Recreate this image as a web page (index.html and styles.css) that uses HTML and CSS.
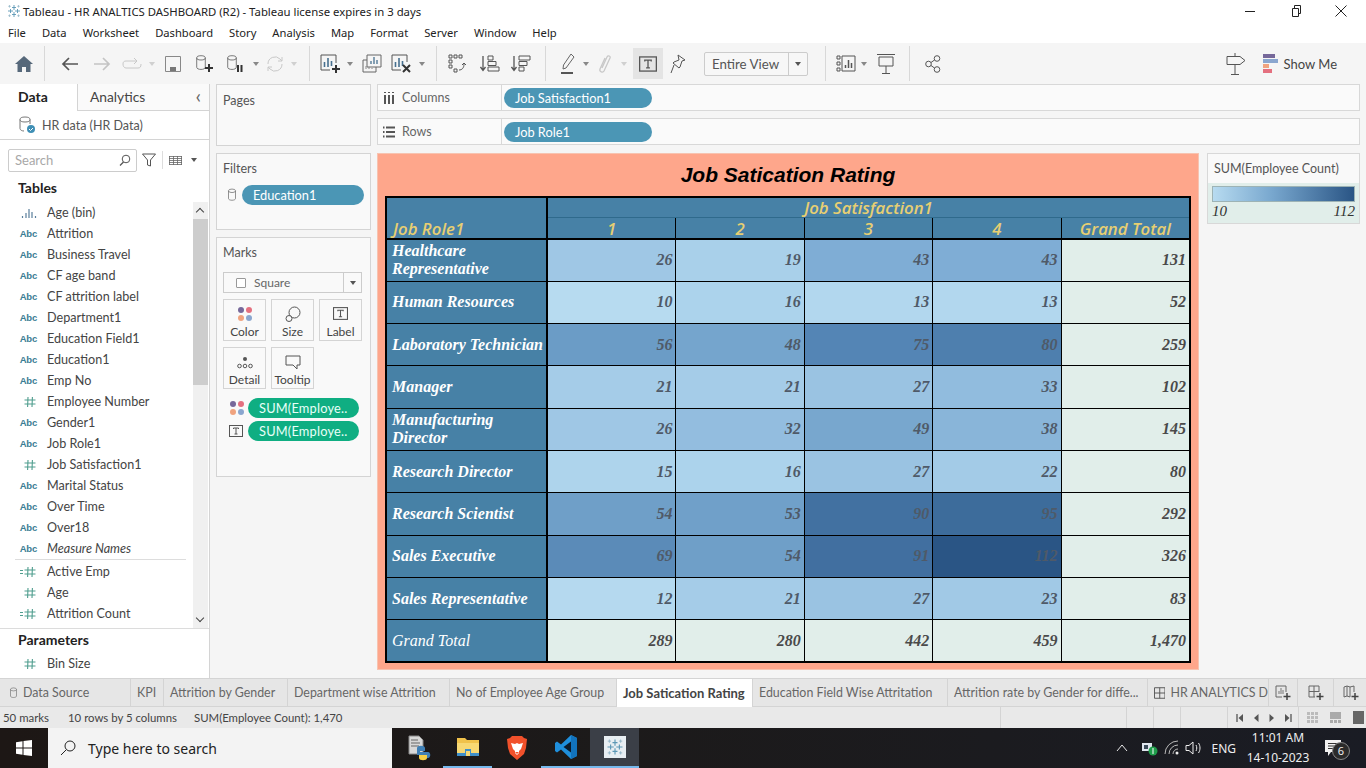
FILE: index.html
```html
<!DOCTYPE html>
<html lang="en">
<head>
    <meta charset="UTF-8">
    <title>Tableau - HR ANALTICS DASHBOARD (R2)</title>
    <link rel="stylesheet" href="styles.css">
</head>
<body>
    <svg class="defs" width="0" height="0">
        <symbol id="snow" viewBox="0 0 16 16">
            <path d="M8 2v5M6 4.500h4M8 9v5M6 11.500h4M2 8h5M4.500 6v4M9 8h5M11.500 6v4" stroke="#5b97b5" stroke-width=".9" fill="none"/>
            <path d="M3.500 2v2.600M2.200 3.300h2.600M12.500 2v2.600M11.200 3.300h2.600M3.500 11.400V14M2.200 12.700h2.600M12.500 11.400V14M11.200 12.700h2.600" stroke="#8fb4c6" stroke-width=".7" fill="none"/>
        </symbol>
        <symbol id="hash" viewBox="0 0 14 14">
            <path d="M5 2 4.600 12M9.400 2 9 12M1.500 5h11M1.500 9h11" stroke="#4f9d8e" stroke-width="1.100" fill="none"/>
        </symbol>
        <symbol id="calc" viewBox="0 0 18 14">
            <path d="M8 2 7.600 12M12.400 2 12 12M4.500 5h11M4.500 9h11" stroke="#4f9d8e" stroke-width="1.100" fill="none"/>
            <path d="M0 5.500h3M0 8.500h3" stroke="#4f9d8e" stroke-width="1" fill="none"/>
        </symbol>
        <symbol id="db" viewBox="0 0 14 20">
            <ellipse cx="7" cy="4" rx="5" ry="2.500" fill="none" stroke="#666"/>
            <path d="M2 4v11c0 1.500 2.200 2.500 5 2.500s5-1 5-2.500V4" fill="none" stroke="#666"/>
        </symbol>
        <symbol id="dots" viewBox="0 0 16 16">
            <circle cx="4" cy="4" r="3" fill="#76689a"/>
            <circle cx="12" cy="4" r="3" fill="#e4707f"/>
            <circle cx="4" cy="12" r="3" fill="#f0a37f"/>
            <circle cx="12" cy="12" r="3" fill="#8aa6cf"/>
        </symbol>
        <symbol id="tbox" viewBox="0 0 14 14">
            <rect x=".5" y="1.500" width="13" height="11" fill="none" stroke="#555"/>
            <path d="M4.500 5V4h5v1M7 4v6M5.500 10h3" fill="none" stroke="#555"/>
        </symbol>
    </svg>

    <header class="titlebar">
        <svg class="win-icon" width="16" height="16"><use href="#snow"/></svg>
        <span class="win-title">Tableau - HR ANALTICS DASHBOARD (R2) - Tableau license expires in 3 days</span>
        <div class="win-controls">
            <svg width="12" height="12" viewBox="0 0 12 12"><path d="M1 6.500h10" stroke="#222"/></svg>
            <svg width="12" height="12" viewBox="0 0 12 12"><path d="M2.500 3.500h6v8h-6zM4.500 3.500V.5h6v8h-2" fill="none" stroke="#222"/></svg>
            <svg width="12" height="12" viewBox="0 0 12 12"><path d="M.5.500l11 11M11.500.500l-11 11" stroke="#222" fill="none"/></svg>
        </div>
    </header>

    <nav class="menubar">
        <span>File</span><span>Data</span><span>Worksheet</span><span>Dashboard</span><span>Story</span><span>Analysis</span><span>Map</span><span>Format</span><span>Server</span><span>Window</span><span>Help</span>
    </nav>

    <div class="toolbar">
        <div class="tool w32"><svg width="18" height="16" viewBox="0 0 18 16"><path d="M9 0 0 8h2.500v8h4.500v-5h4v5h4.500V8H18z" fill="#56687a"/></svg></div>
        <i class="sep s-home"></i>
        <div class="tool w32"><svg width="18" height="14" viewBox="0 0 18 14"><path d="M17 7H2M8 1 2 7l6 6" fill="none" stroke="#555" stroke-width="1.700"/></svg></div>
        <div class="tool w32"><svg width="18" height="14" viewBox="0 0 18 14"><path d="M1 7h15M10 1l6 6-6 6" fill="none" stroke="#c4c4c4" stroke-width="1.700"/></svg></div>
        <div class="tool w28"><svg width="20" height="12" viewBox="0 0 20 12"><path d="M14 3H4C2 3 1 4 1 6s1 4 3 4h12c2 0 3-1 3-4M12 0l3 3-3 3" fill="none" stroke="#c8c8c8"/></svg></div>
        <b class="caret off"></b>
        <div class="tool w30"><svg width="16" height="16" viewBox="0 0 16 16"><path d="M.5.500h15v15H.500z" fill="none" stroke="#888"/><path d="M5 15v-4h6v4z" fill="#777"/></svg></div>
        <div class="tool w34"><svg width="20" height="20" viewBox="0 0 20 20"><use href="#db" width="12" height="18" x="0" y="0"/><path d="M14 10v8M10 14h8" stroke="#333" stroke-width="2"/></svg></div>
        <div class="tool w28"><svg width="20" height="20" viewBox="0 0 20 20"><use href="#db" width="12" height="18" x="0" y="0"/><path d="M12 11v7M15.500 11v7" stroke="#333" stroke-width="2"/></svg></div>
        <b class="caret"></b>
        <div class="tool w26"><svg width="18" height="18" viewBox="0 0 18 18"><path d="M2 9a7 7 0 0 1 12-5l2 2M16 9a7 7 0 0 1-12 5l-2-2M16 2v4h-4M2 16v-4h4" fill="none" stroke="#c8c8c8"/></svg></div>
        <b class="caret off"></b>
        <i class="sep s-a"></i>
        <div class="tool w26"><svg width="22" height="20" viewBox="0 0 22 20"><path d="M16 1H1v15h9" fill="none" stroke="#555"/><path d="M16 1v8" stroke="#555"/><path d="M4.500 8v5M8 4v9M11.500 7v5" stroke="#47708f" stroke-width="1.600"/><path d="M16 11v8M12 15h8" stroke="#333" stroke-width="2"/></svg></div>
        <b class="caret"></b>
        <div class="tool w32"><svg width="20" height="20" viewBox="0 0 20 20"><path d="M5 1h14v12H5z" fill="#f5f5f5" stroke="#666"/><path d="M9 10V7M12 10V3M15 10V6" stroke="#47708f" stroke-width="1.300"/><path d="M5 6H1v12h13v-5" fill="none" stroke="#666"/><path d="M4 15v-3M7 15v-2M10 15v-1" stroke="#888"/></svg></div>
        <div class="tool w28"><svg width="22" height="20" viewBox="0 0 22 20"><path d="M16 8V1H1v15h9" fill="none" stroke="#555"/><path d="M4.500 8v5M8 4v9M11.500 7v5" stroke="#47708f" stroke-width="1.600"/><path d="m12 11 7 7M19 11l-7 7" stroke="#333" stroke-width="2"/></svg></div>
        <b class="caret"></b>
        <i class="sep s-b"></i>
        <div class="tool w28"><svg width="20" height="20" viewBox="0 0 20 20"><path d="M2 1h3v3H2zM7 1h3v3H7zM12 1h3v3h-3zM2 6h3v3H2zM2 11h3v3H2zM7 15h3v3H7z" fill="none" stroke="#555"/><path d="M12 16c3 0 5-2 5-6M15 11l2-2 2 2" fill="none" stroke="#555"/></svg></div>
        <div class="tool w38"><svg width="20" height="20" viewBox="0 0 20 20"><path d="M3 2v14M.500 13 3 16.500 5.500 13" fill="none" stroke="#555" stroke-width="1.300"/><path d="M8 2h5v4H8zM8 7.500h8v4H8zM8 13h11v4H8z" fill="none" stroke="#555"/></svg></div>
        <div class="tool w24"><svg width="20" height="20" viewBox="0 0 20 20"><path d="M3 2v14M.500 13 3 16.500 5.500 13" fill="none" stroke="#555" stroke-width="1.300"/><path d="M8 2h11v4H8zM8 7.500h8v4H8zM8 13h5v4H8z" fill="none" stroke="#555"/></svg></div>
        <i class="sep s-c"></i>
        <div class="tool w24"><svg width="16" height="22" viewBox="0 0 16 22"><path d="M11 1 14 4 6 15l-3 1 .5-4z" fill="none" stroke="#666"/><path d="M1 20h12" stroke="#555" stroke-width="2"/></svg></div>
        <b class="caret"></b>
        <div class="tool w26"><svg width="14" height="22" viewBox="0 0 14 22"><path d="M4 15 9 4c1-2 4-1 3 1L6 18c-1 2-5 1-4-2l5-11" fill="none" stroke="#c8c8c8" stroke-width="1.300"/></svg></div>
        <b class="caret off"></b>
        <div class="tool w30 tool-on"><svg width="18" height="18"><use href="#tbox" width="18" height="18"/></svg></div>
        <div class="tool w30"><svg width="16" height="20" viewBox="0 0 16 20"><path d="M8 1l7 5-3 1-2 6-1 1-6-5 1-1 5-2zM4 11l-3 8" fill="none" stroke="#555"/></svg></div>
        <div class="fit-select"><span class="fit-label">Entire View</span><span class="fit-arrow"><b class="caret dark"></b></span></div>
        <i class="sep s-d"></i>
        <div class="tool w24"><svg width="20" height="20" viewBox="0 0 20 20"><path d="M1 2h3v3H1zM1 8h3v3H1zM1 14h3v3H1zM6 2h13v15H6z" fill="none" stroke="#555"/><path d="M9.500 14v-3M12.500 14V6M15.500 14V9" stroke="#555" stroke-width="1.500"/></svg></div>
        <b class="caret"></b>
        <div class="tool w32"><svg width="18" height="20" viewBox="0 0 18 20"><path d="M0 .500h18M2 3h14v9H2zM9 12v7M5 19.500h8" fill="none" stroke="#555"/></svg></div>
        <i class="sep s-e"></i>
        <div class="tool w32"><svg width="16" height="18" viewBox="0 0 16 18"><circle cx="3.500" cy="9" r="2.800" fill="none" stroke="#555"/><circle cx="12" cy="3.500" r="2.800" fill="none" stroke="#555"/><circle cx="12" cy="14.500" r="2.800" fill="none" stroke="#555"/><path d="M6 7.500 9.500 5M6 10.500 9.500 13" stroke="#555"/></svg></div>
        <div class="tool guide"><svg width="20" height="22" viewBox="0 0 20 22"><path d="M9 0v3M1 3.500h13l5 4-5 4H1zM9 11.500V21M5 21.500h8" fill="none" stroke="#555"/></svg></div>
        <div class="show-me">
            <svg width="16" height="22" viewBox="0 0 16 22"><path d="M0 1h12v4H0z" fill="#76689a"/><path d="M0 6h15v4H0z" fill="#8aa6cf"/><path d="M0 11h6v4H0z" fill="#f0a37f"/><path d="M0 16h9v4H0z" fill="#e4707f"/></svg>
            <span>Show Me</span>
        </div>
    </div>

    <main class="workspace">
        <aside class="data-pane">
            <div class="pane-tabs">
                <div class="pane-tab active">Data</div>
                <div class="pane-tab">Analytics<span class="chev">&#8249;</span></div>
            </div>
            <div class="source">
                <svg width="18" height="18" viewBox="0 0 18 18"><ellipse cx="7" cy="3.500" rx="5" ry="2.500" fill="none" stroke="#777"/><path d="M2 3.500v9c0 1.500 2 2.500 4 2.500M12 3.500V8" fill="none" stroke="#777"/><circle cx="13" cy="13" r="4" fill="#3f8fb5"/><path d="m11 13 1.500 1.500L15 12" fill="none" stroke="#fff"/></svg>
                <span>HR data (HR Data)</span>
            </div>
            <div class="search-row">
                <div class="search-box">
                    <span>Search</span>
                    <svg width="12" height="12" viewBox="0 0 12 12"><circle cx="7" cy="5" r="3.800" fill="none" stroke="#555"/><path d="M4.500 8 1 11.500" stroke="#555" stroke-width="1.300"/></svg>
                </div>
                <svg class="funnel" width="14" height="14" viewBox="0 0 14 14"><path d="M.5 1h13L8.500 7v6l-3-1V7z" fill="none" stroke="#555"/></svg>
                <i class="mini-sep"></i>
                <svg width="13" height="9" viewBox="0 0 13 9"><path d="M0 .500h13M0 2.500h13M0 4.500h13M0 6.500h13M0 8.500h13M.500 0v9M4.500 0v9M8.500 0v9M12.500 0v9" stroke="#666" stroke-width=".8"/></svg>
                <b class="caret dark view-caret"></b>
            </div>
            <h3 class="group-title">Tables</h3>
            <div class="field-scroll">
                <ul class="fields">
                    <li><span class="ftype"><svg width="16" height="12" viewBox="0 0 16 12"><path d="M1.500 9v2M5 6v5M8 2v9M11 5v6M14.500 9v2" stroke="#5a7f9c" stroke-width="1.200"/></svg></span>Age (bin)</li>
                    <li><span class="ftype">Abc</span>Attrition</li>
                    <li><span class="ftype">Abc</span>Business Travel</li>
                    <li><span class="ftype">Abc</span>CF age band</li>
                    <li><span class="ftype">Abc</span>CF attrition label</li>
                    <li><span class="ftype">Abc</span>Department1</li>
                    <li><span class="ftype">Abc</span>Education Field1</li>
                    <li><span class="ftype">Abc</span>Education1</li>
                    <li><span class="ftype">Abc</span>Emp No</li>
                    <li><span class="ftype"><svg width="14" height="14"><use href="#hash"/></svg></span>Employee Number</li>
                    <li><span class="ftype">Abc</span>Gender1</li>
                    <li><span class="ftype">Abc</span>Job Role1</li>
                    <li><span class="ftype"><svg width="14" height="14"><use href="#hash"/></svg></span>Job Satisfaction1</li>
                    <li><span class="ftype">Abc</span>Marital Status</li>
                    <li><span class="ftype">Abc</span>Over Time</li>
                    <li><span class="ftype">Abc</span>Over18</li>
                    <li class="last-dim"><span class="ftype">Abc</span><em>Measure Names</em></li>
                    <li><span class="ftype calc"><svg width="18" height="14"><use href="#calc"/></svg></span>Active Emp</li>
                    <li><span class="ftype"><svg width="14" height="14"><use href="#hash"/></svg></span>Age</li>
                    <li><span class="ftype calc"><svg width="18" height="14"><use href="#calc"/></svg></span>Attrition Count</li>
                </ul>
                <div class="scrollbar">
                    <span class="arrow up"></span>
                    <div class="track"><div class="thumb"></div></div>
                    <span class="arrow down"></span>
                </div>
            </div>
            <div class="params">
                <h3 class="group-title">Parameters</h3>
                <ul class="fields">
                    <li><span class="ftype"><svg width="14" height="14"><use href="#hash"/></svg></span>Bin Size</li>
                </ul>
            </div>
        </aside>

        <section class="cards">
            <div class="card pages-card"><div class="card-title">Pages</div></div>
            <div class="card filters-card">
                <div class="card-title">Filters</div>
                <div class="filter-row">
                    <svg width="10" height="14"><use href="#db" width="10" height="14"/></svg>
                    <span class="pill blue filter-pill">Education1</span>
                </div>
            </div>
            <div class="card marks-card">
                <div class="card-title">Marks</div>
                <div class="mark-type">
                    <span class="mark-name"><i class="mark-square"></i>Square</span>
                    <span class="mark-arrow"><b class="caret dark"></b></span>
                </div>
                <div class="mark-grid">
                    <div class="mark-btn"><svg width="16" height="16"><use href="#dots"/></svg><span>Color</span></div>
                    <div class="mark-btn"><svg width="16" height="16" viewBox="0 0 16 16"><circle cx="9.500" cy="6.500" r="5.500" fill="none" stroke="#555"/><circle cx="4" cy="12.500" r="3" fill="#f9f9f9" stroke="#555"/></svg><span>Size</span></div>
                    <div class="mark-btn"><svg width="15" height="15"><use href="#tbox" width="15" height="15"/></svg><span>Label</span></div>
                    <div class="mark-btn"><svg width="16" height="16" viewBox="0 0 16 16"><circle cx="8" cy="5" r="2" fill="#555"/><circle cx="2.500" cy="12" r="1.800" fill="none" stroke="#555"/><circle cx="8" cy="12" r="1.800" fill="none" stroke="#555"/><circle cx="13.500" cy="12" r="1.800" fill="none" stroke="#555"/></svg><span>Detail</span></div>
                    <div class="mark-btn"><svg width="16" height="16" viewBox="0 0 16 16"><path d="M1 2h14v9h-3v4l-4-4H1z" fill="none" stroke="#555"/></svg><span>Tooltip</span></div>
                </div>
                <div class="mark-pill"><svg width="16" height="16"><use href="#dots"/></svg><span class="pill green">SUM(Employe..</span></div>
                <div class="mark-pill"><svg width="14" height="14"><use href="#tbox" width="14" height="14"/></svg><span class="pill green">SUM(Employe..</span></div>
            </div>
        </section>

        <section class="stage">
            <div class="shelves">
                <div class="shelf">
                    <div class="shelf-label">
                        <svg width="12" height="12" viewBox="0 0 12 12"><path d="M2 3v9M6 3v9M10 3v9" stroke="#555" stroke-width="2"/><path d="M1 .500h2M5 .500h2M9 .500h2" stroke="#555"/></svg>
                        Columns
                    </div>
                    <div class="shelf-drop"><span class="pill blue shelf-pill">Job Satisfaction1</span></div>
                </div>
                <div class="shelf">
                    <div class="shelf-label">
                        <svg width="12" height="12" viewBox="0 0 12 12"><path d="M3 1.500h9M3 6h9M3 10.500h9M0 1.500h1.500M0 6h1.500M0 10.500h1.500" stroke="#555" stroke-width="2"/></svg>
                        Rows
                    </div>
                    <div class="shelf-drop"><span class="pill blue shelf-pill">Job Role1</span></div>
                </div>
            </div>
            <div class="view-row">
                <div class="viz">
                    <h1 class="viz-title">Job Satication Rating</h1>
                    <div class="crosstab">
                        <div class="hd corner">Job Role1</div>
                        <div class="hd col-span">Job Satisfaction1</div>
                        <div class="hd col-hd">1</div>
                        <div class="hd col-hd">2</div>
                        <div class="hd col-hd">3</div>
                        <div class="hd col-hd">4</div>
                        <div class="hd col-hd">Grand Total</div>

                        <div class="role">Healthcare Representative</div>
                        <div class="val" style="background:#9fc7e5">26</div>
                        <div class="val" style="background:#a9d0ea">19</div>
                        <div class="val" style="background:#7fadd5">43</div>
                        <div class="val" style="background:#7fadd5">43</div>
                        <div class="val total">131</div>

                        <div class="role">Human Resources</div>
                        <div class="val" style="background:#b7dbf0">10</div>
                        <div class="val" style="background:#acd3ec">16</div>
                        <div class="val" style="background:#b2d7ee">13</div>
                        <div class="val" style="background:#b2d7ee">13</div>
                        <div class="val total">52</div>

                        <div class="role">Laboratory Technician</div>
                        <div class="val" style="background:#6b9cc6">56</div>
                        <div class="val" style="background:#75a5cd">48</div>
                        <div class="val" style="background:#5485b5">75</div>
                        <div class="val" style="background:#4e7fae">80</div>
                        <div class="val total">259</div>

                        <div class="role">Manager</div>
                        <div class="val" style="background:#a5cce8">21</div>
                        <div class="val" style="background:#a5cce8">21</div>
                        <div class="val" style="background:#9ac3e2">27</div>
                        <div class="val" style="background:#91bcde">33</div>
                        <div class="val total">102</div>

                        <div class="role">Manufacturing Director</div>
                        <div class="val" style="background:#9fc7e5">26</div>
                        <div class="val" style="background:#93bddf">32</div>
                        <div class="val" style="background:#78a7ce">49</div>
                        <div class="val" style="background:#89b5d9">38</div>
                        <div class="val total">145</div>

                        <div class="role">Research Director</div>
                        <div class="val" style="background:#aed4ec">15</div>
                        <div class="val" style="background:#acd3ec">16</div>
                        <div class="val" style="background:#9ac3e2">27</div>
                        <div class="val" style="background:#a3cbe7">22</div>
                        <div class="val total">80</div>

                        <div class="role">Research Scientist</div>
                        <div class="val" style="background:#6f9fc8">54</div>
                        <div class="val" style="background:#70a0c9">53</div>
                        <div class="val" style="background:#4271a1">90</div>
                        <div class="val" style="background:#3d6c9b">95</div>
                        <div class="val total">292</div>

                        <div class="role">Sales Executive</div>
                        <div class="val" style="background:#5b8bb8">69</div>
                        <div class="val" style="background:#6f9fc8">54</div>
                        <div class="val" style="background:#416fa0">91</div>
                        <div class="val" style="background:#2a5585">112</div>
                        <div class="val total">326</div>

                        <div class="role">Sales Representative</div>
                        <div class="val" style="background:#b5d9ef">12</div>
                        <div class="val" style="background:#a5cce8">21</div>
                        <div class="val" style="background:#9ac3e2">27</div>
                        <div class="val" style="background:#a1c9e6">23</div>
                        <div class="val total">83</div>

                        <div class="role grand">Grand Total</div>
                        <div class="val total">289</div>
                        <div class="val total">280</div>
                        <div class="val total">442</div>
                        <div class="val total">459</div>
                        <div class="val total">1,470</div>
                    </div>
                </div>
                <aside class="legend">
                    <div class="legend-title">SUM(Employee Count)</div>
                    <div class="legend-body">
                        <div class="ramp"></div>
                        <div class="ramp-labels"><span>10</span><span>112</span></div>
                    </div>
                </aside>
            </div>
        </section>
    </main>

    <div class="tabbar">
        <div class="tab t-source"><svg width="9" height="12"><use href="#db" width="9" height="12"/></svg>Data Source</div>
        <div class="tab t-kpi">KPI</div>
        <div class="tab t-gender">Attrition by Gender</div>
        <div class="tab t-dept">Department wise Attrition</div>
        <div class="tab t-age">No of Employee Age Group</div>
        <div class="tab t-job active">Job Satication Rating</div>
        <div class="tab t-edu">Education Field Wise Attritation</div>
        <div class="tab t-rate">Attrition rate by Gender for diffe...</div>
        <div class="tab t-dash"><svg width="12" height="12" viewBox="0 0 12 12"><path d="M.5.500h11v11H.500zM6 .500v11M.500 6h11" fill="none" stroke="#555"/></svg>HR ANALYTICS D</div>
        <div class="tab t-add"><svg width="16" height="16" viewBox="0 0 16 16"><path d="M11 7V1H1v11h6" fill="none" stroke="#666"/><path d="M4 9V6M6 9V3M8 9V5" stroke="#777"/><path d="M12 8v7M8.500 11.500h7" stroke="#444" stroke-width="1.500"/></svg></div>
        <div class="tab t-add2"><svg width="16" height="16" viewBox="0 0 16 16"><path d="M11 7V1H1v11h6M1 6.500h10M6 1v11" fill="none" stroke="#666"/><path d="M12 8v7M8.500 11.500h7" stroke="#444" stroke-width="1.500"/></svg></div>
        <div class="tab t-add3"><svg width="16" height="16" viewBox="0 0 16 16"><path d="M1 2l3-1 3 1 4-1v6M1 2v10l3-1 3 1M4 1v10M7 2v10" fill="none" stroke="#666"/><path d="M12 8v7M8.500 11.500h7" stroke="#444" stroke-width="1.500"/></svg></div>
    </div>

    <div class="statusbar">
        <span class="st-marks">50 marks</span>
        <span class="st-rows">10 rows by 5 columns</span>
        <span class="st-sum">SUM(Employee Count): 1,470</span>
        <div class="st-cells"><i class="c1"></i><i class="c2"></i><i class="c3"></i><i class="c4"></i></div>
        <div class="st-nav">
            <svg width="8" height="8" viewBox="0 0 8 8"><path d="M1 0v8" stroke="#555" stroke-width="1.300"/><path d="M7 0v8L2.500 4z" fill="#555"/></svg>
            <svg width="8" height="8" viewBox="0 0 8 8"><path d="M6.500 0v8L2 4z" fill="#555"/></svg>
            <svg width="8" height="8" viewBox="0 0 8 8"><path d="M1.500 0v8L6 4z" fill="#555"/></svg>
            <svg width="8" height="8" viewBox="0 0 8 8"><path d="M7 0v8" stroke="#555" stroke-width="1.300"/><path d="M1 0v8l4.500-4z" fill="#555"/></svg>
        </div>
        <div class="st-views">
            <svg width="11" height="11" viewBox="0 0 11 11"><path d="M0 0h3v3H0zM4 0h3v3H4zM8 0h3v3H8zM0 4h3v3H0zM4 4h3v3H4zM8 4h3v3H8zM0 8h3v3H0zM4 8h3v3H4zM8 8h3v3H8z" fill="#bbb"/></svg>
            <svg width="11" height="11" viewBox="0 0 11 11"><path d="M0 0h11v7H0zM0 8h3v3H0zM4 8h3v3H4zM8 8h3v3H8z" fill="#aaa"/></svg>
            <svg width="11" height="13" viewBox="0 0 11 13"><path d="M0 0h11v13H0z" fill="#666"/></svg>
        </div>
    </div>

    <footer class="taskbar">
        <div class="start"><svg width="16" height="16" viewBox="0 0 16 16"><path d="M0 2.200 6.500 1.300V7.500H0zM7.500 1.100 16 0v7.500H7.500zM0 8.500h6.500v6.200L0 13.800zM7.500 8.500H16V16l-8.500-1.100z" fill="#fff"/></svg></div>
        <div class="task-search">
            <svg width="16" height="16" viewBox="0 0 16 16"><circle cx="10" cy="6" r="5" fill="none" stroke="#222"/><path d="M6.300 9.700 1 15" stroke="#222"/></svg>
            <span>Type here to search</span>
        </div>
        <div class="task-apps">
            <div class="app"><svg width="24" height="26" viewBox="0 0 24 26"><path d="M2 1h10l4 4v14H2z" fill="#d8d8d8" stroke="#888"/><path d="M4 5h7M4 8h9M4 11h8" stroke="#666"/><path d="M10 13c0-3 8-3 8 0v3h-5v1h8c3 0 3 6 0 6h-3v-3h-8z" fill="#3f7fb5"/><path d="M14 20h6v3c0 3-8 3-8 0v-3z" fill="#f5cf47"/></svg></div>
            <div class="app app-open"><svg width="22" height="20" viewBox="0 0 22 20"><path d="M0 1h8l2 2h12v15H0z" fill="#f0c24b"/><path d="M0 6h22v13H0z" fill="#f7d873"/><path d="M8 12h6v7H8z" fill="#3f8fc9"/><path d="M0 16h22v3H0z" fill="#3f8fc9"/><path d="M9 14h4v5H9z" fill="#f7d873"/></svg></div>
            <div class="app"><svg width="20" height="24" viewBox="0 0 20 24"><path d="M5 0h10l2 2 3 1-1 9-2 6-7 6-7-6-2-6L0 3l3-1z" fill="#f1512b"/><path d="M4 7l4 1 2-1 2 1 4-1-2 6-2 2v2l-2 2-2-2v-2l-2-2z" fill="#fff"/><path d="M8 16h4l-2 2z" fill="#f1512b"/></svg></div>
            <div class="app app-open"><svg width="24" height="24" viewBox="0 0 24 24"><path d="M17 0l6 3v18l-6 3-10-9.500-4 3L1 16v-8l2-1.500 4 3z" fill="#1f8fdc"/><path d="M17 6.500v11L9.500 12z" fill="#0b1a2a"/><path d="M17 0l6 3v18l-6 3z" fill="#1273bd"/></svg></div>
            <div class="app app-active app-open"><span class="tb-tile"><svg width="20" height="20"><use href="#snow" width="20" height="20"/></svg></span></div>
        </div>
        <div class="tray">
            <svg class="tray-up" width="12" height="8" viewBox="0 0 12 8"><path d="M1 7l5-6 5 6" fill="none" stroke="#e8e8e8"/></svg>
            <svg class="tray-batt" width="16" height="16" viewBox="0 0 16 16"><path d="M0 3h10v8H0z" fill="#dfe6ee"/><path d="M2 5h4v4H2z" fill="#3b4a5a"/><circle cx="11" cy="11" r="4.500" fill="#1f9d4b"/><path d="M11 8v6" stroke="#fff"/></svg>
            <svg class="tray-wifi" width="16" height="16" viewBox="0 0 16 16"><path d="M1 14a13 13 0 0 1 13-13M5 14a9 9 0 0 1 9-9M9 14a5 5 0 0 1 5-5" fill="none" stroke="#b9b9b9"/><circle cx="13" cy="13" r="1.500" fill="#eee"/></svg>
            <svg class="tray-sound" width="18" height="16" viewBox="0 0 18 16"><path d="M1 5.500h3L8 2v12l-4-3.500H1z" fill="none" stroke="#eee"/><path d="M11 5c1 2 1 4 0 6M13.500 3c2 3 2 7 0 10" fill="none" stroke="#eee"/></svg>
            <span class="lang">ENG</span>
            <div class="clock"><span>11:01 AM</span><span>14-10-2023</span></div>
            <div class="notify">
                <svg width="18" height="18" viewBox="0 0 18 18"><path d="M1 1h16v12H7l-3 4v-4H1z" fill="#f2f2f2"/><path d="M4 4.500h10M4 7h10M4 9.500h7" stroke="#333"/></svg>
                <span class="badge">6</span>
            </div>
        </div>
    </footer>
</body>
</html>
```

FILE: styles.css
```css
* {
    box-sizing: border-box;
}
body {
    margin: 0;
    width: 1366px;
    height: 768px;
    overflow: hidden;
    background: #f5f5f5;
    color: #333;
    font-family: "Open Sans", "Noto Sans", sans-serif;
    font-size: 12px;
    display: flex;
    flex-direction: column;
}
.defs {
    position: absolute;
}
ul {
    list-style: none;
    margin: 0;
    padding: 0;
}

/* window chrome */
.titlebar {
    height: 22px;
    background: #fff;
    display: flex;
    align-items: center;
    padding-left: 6px;
    flex: none;
}
.win-title {
    margin-left: 1px;
    font-family: "Noto Sans", sans-serif;
    font-size: 11.35px;
    color: #222;
}
.win-controls {
    margin-left: auto;
    display: flex;
    gap: 33.500px;
    padding-right: 19px;
}
.menubar {
    height: 21px;
    background: #fff;
    display: flex;
    align-items: center;
    gap: 16px;
    padding-left: 8px;
    color: #222;
    font-family: "Noto Sans", sans-serif;
    font-size: 11.2px;
    flex: none;
}

/* toolbar */
.toolbar {
    height: 41px;
    flex: none;
    display: flex;
    align-items: center;
    padding-left: 8px;
    background: #f5f5f5;
}
.tool {
    height: 30px;
    display: flex;
    align-items: center;
    justify-content: center;
    flex: none;
}
.w24 { width: 24px; }
.w26 { width: 26px; }
.w28 { width: 28px; }
.w30 { width: 30px; }
.w32 { width: 32px; }
.w34 { width: 34px; }
.w38 { width: 38px; }
.tool-on {
    background: #e4e4e4;
    margin-left: 3px;
    height: 31px;
}
.caret {
    width: 12px;
    height: 4px;
    flex: none;
    position: relative;
    display: block;
}
.caret::after {
    content: "";
    position: absolute;
    left: 3px;
    top: 0;
    border-left: 3px solid transparent;
    border-right: 3px solid transparent;
    border-top: 4px solid #888;
}
.caret.off::after {
    border-top-color: #d0d0d0;
}
.caret.dark::after {
    border-top-color: #555;
}
.sep {
    width: 1px;
    height: 35px;
    background: #d8d8d8;
    flex: none;
}
.s-home { margin: 0 9px 0 4px; }
.s-a { margin: 0 8px 0 9px; }
.s-b { margin: 0 6px 0 8px; }
.s-c { margin: 0 10px 0 12px; }
.s-d { margin: 0 8px 0 17px; }
.s-e { margin: 0 7px 0 7px; }
.fit-select {
    margin-left: 11px;
    width: 104px;
    height: 24px;
    display: flex;
    border: 1px solid #ccc;
    border-radius: 2px;
    background: #f7f7f7;
    color: #555;
    align-items: center;
    flex: none;
}
.fit-label {
    flex: 1;
    padding-left: 7px;
    font-family: "Lato", sans-serif;
    font-size: 13.3px;
}
.fit-arrow {
    width: 19px;
    height: 100%;
    border-left: 1px solid #ccc;
    display: flex;
    align-items: center;
    justify-content: center;
}
.guide {
    margin-left: auto;
    width: 24px;
}
.show-me {
    margin: 0 29px 0 15px;
    display: flex;
    align-items: center;
    gap: 5px;
    font-family: "Lato", sans-serif;
    font-size: 13px;
    color: #444;
}

/* main area */
.workspace {
    height: 594px;
    flex: none;
    display: flex;
}
.data-pane {
    width: 210px;
    background: #fff;
    border-right: 1px solid #d4d4d4;
    flex: none;
    display: flex;
    flex-direction: column;
    font-family: "Lato", sans-serif;
    font-size: 12.6px;
    color: #444;
}
.pane-tabs {
    display: flex;
    height: 27px;
}
.pane-tab {
    font-size: 13.8px;
    line-height: 26px;
    flex: 1;
    padding-left: 12px;
    border-left: 1px solid #d4d4d4;
    border-bottom: 1px solid #d4d4d4;
    position: relative;
    background: #fafafa;
}
.pane-tab.active {
    flex: none;
    width: 77px;
    padding-left: 18px;
    font-size: 14px;
    font-weight: 700;
    color: #222;
    background: #fff;
    border: 0;
}
.chev {
    position: absolute;
    right: 8px;
    top: -2px;
    font-size: 20px;
    color: #666;
}
.source {
    height: 29px;
    border-bottom: 1px solid #d4d4d4;
    display: flex;
    align-items: center;
    gap: 6px;
    padding-left: 18px;
    font-size: 12.5px;
    color: #555;
}
.search-row {
    height: 38px;
    display: flex;
    align-items: center;
    padding: 2px 0 0 8px;
}
.search-box {
    width: 129px;
    height: 23px;
    border: 1px solid #ccc;
    border-radius: 2px;
    display: flex;
    align-items: center;
    justify-content: space-between;
    padding: 0 5px 0 6px;
    color: #a8a8a8;
    font-size: 13px;
}
.funnel {
    margin-left: 5px;
}
.mini-sep {
    width: 1px;
    height: 18px;
    background: #ddd;
    margin: 0 6px;
}
.view-caret {
    margin-left: 6px;
}
.group-title {
    margin: 0;
    padding-left: 18px;
    font-size: 14px;
    font-weight: 700;
    line-height: 20px;
    color: #222;
}
.field-scroll {
    height: 426px;
    margin-top: 4px;
    display: flex;
    position: relative;
    overflow: hidden;
}
.fields {
    flex: 1;
}
.fields li {
    height: 21px;
    display: flex;
    align-items: center;
    white-space: nowrap;
}
.ftype {
    width: 47px;
    padding-right: 10px;
    display: flex;
    justify-content: flex-end;
    color: #3a7d94;
    font-family: "Liberation Sans", sans-serif;
    font-size: 9.5px;
    letter-spacing: -.2px;
    font-weight: 700;
    flex: none;
}
.ftype.calc {
    padding-right: 9px;
}
.fields li.last-dim {
    position: relative;
    margin-bottom: 2px;
}
.last-dim::after {
    content: "";
    position: absolute;
    left: 15px;
    right: 7px;
    bottom: -1px;
    height: 1px;
    background: #ddd;
}
.scrollbar {
    width: 15px;
    margin-right: 1px;
    background: #f0f0f0;
    display: flex;
    flex-direction: column;
    align-items: center;
    flex: none;
}
.arrow {
    height: 17px;
    width: 100%;
    position: relative;
}
.arrow::after {
    content: "";
    position: absolute;
    left: 4px;
    width: 5px;
    height: 5px;
    border-left: 1.500px solid #444;
    border-top: 1.500px solid #444;
}
.arrow.up::after {
    top: 7px;
    transform: rotate(45deg);
}
.arrow.down::after {
    top: 4px;
    transform: rotate(225deg);
}
.track {
    flex: 1;
    width: 100%;
}
.thumb {
    height: 166px;
    background: #cdcdcd;
}
.params {
    border-top: 1px solid #dcdcdc;
    padding-top: 1px;
    flex: 1;
}
.params .group-title {
    margin-bottom: 3px;
}

/* pages / filters / marks */
.cards {
    width: 167px;
    flex: none;
    padding: 0 6px 0 6px;
    display: flex;
    flex-direction: column;
    gap: 7px;
}
.card {
    background: #f9f9f9;
    border: 1px solid #d4d4d4;
    padding: 7px 6px;
    font-family: "Lato", sans-serif;
    color: #555;
}
.card-title {
    font-size: 12.5px;
    line-height: 16px;
}
.pages-card {
    height: 62px;
    padding-top: 8px;
}
.filters-card {
    height: 77px;
}
.filter-row {
    margin-top: 8px;
    display: flex;
    align-items: center;
    gap: 5px;
    padding-left: 4px;
}
.pill {
    display: block;
    height: 20px;
    line-height: 20px;
    border-radius: 10px;
    color: #fff;
    font-family: "Lato", sans-serif;
    font-size: 12.8px;
}
.pill.blue {
    background: #4b96b5;
}
.pill.green {
    background: #0fae82;
    width: 111px;
    padding-left: 11px;
    color: #e8fff8;
    letter-spacing: .2px;
}
.filter-pill {
    width: 123px;
    padding-left: 11px;
}
.marks-card {
    height: 240px;
}
.mark-type {
    margin-top: 11px;
    width: 139px;
    height: 21px;
    border: 1px solid #ccc;
    display: flex;
    align-items: center;
}
.mark-name {
    flex: 1;
    display: flex;
    align-items: center;
    padding-left: 12px;
    gap: 8px;
    font-size: 12px;
    color: #666;
}
.mark-square {
    width: 10px;
    height: 10px;
    border: 1px solid #999;
    border-radius: 1px;
    background: #fff;
}
.mark-arrow {
    width: 18px;
    height: 100%;
    border-left: 1px solid #ccc;
    display: flex;
    align-items: center;
    justify-content: center;
}
.mark-grid {
    margin-top: 6px;
    display: grid;
    grid-template-columns: repeat(3, 43px);
    column-gap: 5px;
    row-gap: 6px;
}
.mark-btn {
    height: 42px;
    border: 1px solid #d4d4d4;
    display: flex;
    flex-direction: column;
    align-items: center;
    justify-content: space-between;
    padding: 6px 0 1px;
    font-size: 12px;
    color: #444;
}
.mark-pill {
    margin-top: 3px;
    display: flex;
    align-items: center;
    padding-left: 6px;
    gap: 3px;
}
.mark-grid + .mark-pill {
    margin-top: 9px;
}
.mark-pill svg {
    width: 16px;
    flex: none;
}

/* shelves + view */
.stage {
    flex: 1;
    padding-right: 6px;
    min-width: 0;
}
.shelves {
    display: flex;
    flex-direction: column;
    gap: 7px;
}
.shelf {
    height: 27px;
    display: flex;
    background: #fafafa;
    border: 1px solid #d8d8d8;
    font-family: "Lato", sans-serif;
}
.shelf-label {
    width: 124px;
    display: flex;
    align-items: center;
    gap: 7px;
    padding-left: 5px;
    border-right: 1px solid #d8d8d8;
    font-size: 12.5px;
    color: #666;
}
.shelf-drop {
    flex: 1;
    padding: 3px 2px;
}
.shelf-pill {
    width: 148px;
    padding-left: 11px;
}
.view-row {
    margin-top: 8px;
    display: flex;
    align-items: flex-start;
    gap: 8px;
}
.viz {
    width: 822px;
    height: 517px;
    background: #fea68b;
    border: 1px solid #f7c3b0;
    padding: 0 7px;
    flex: none;
}
.viz-title {
    margin: 0;
    height: 42px;
    line-height: 42px;
    text-align: center;
    font-family: "Liberation Sans", sans-serif;
    font-size: 21px;
    font-weight: 700;
    font-style: italic;
    color: #000;
}
.crosstab {
    width: 806px;
    display: grid;
    grid-template-columns: 160px repeat(5, 1fr);
    grid-template-rows: 19px 20.500px repeat(10, 41.300px);
    gap: 1px;
    padding: 2px;
    background: #000;
}
.hd {
    background: #4781a6;
    color: #e7cf72;
    font-family: "Open Sans", sans-serif;
    font-style: italic;
    font-weight: 600;
    font-size: 16.8px;
    line-height: 19px;
    display: flex;
    align-items: center;
    justify-content: center;
}
.corner {
    grid-row: span 2;
    justify-content: flex-start;
    align-items: flex-end;
    padding: 0 0 1px 6px;
    box-shadow: inset 0 -1px 0 #000, inset -1px 0 0 #000;
}
.col-span {
    grid-column: span 5;
    margin-bottom: -1px;
    border-bottom: 1px solid #2f6a8c;
}
.col-hd {
    box-shadow: inset 0 -1px 0 #000;
}
.role {
    background: #4781a6;
    color: #fff;
    font-family: "Liberation Serif", serif;
    font-size: 16px;
    font-weight: 700;
    font-style: italic;
    line-height: 18px;
    display: flex;
    align-items: center;
    padding: 0 1px 0 5px;
    box-shadow: inset -1px 0 0 #000, 0 1px 0 #000;
}
.role.grand {
    font-weight: 400;
}
.val {
    display: flex;
    align-items: center;
    justify-content: flex-end;
    padding-right: 3px;
    font-family: "Liberation Serif", serif;
    font-size: 16px;
    font-weight: 700;
    font-style: italic;
    color: #4f5a68;
}
.val.total {
    background: #e1eeea;
    color: #4a4a4a;
}
.legend {
    width: 153px;
    height: 71px;
    border: 1px solid #d8d8d8;
    background: #f9f9f9;
    flex: none;
}
.legend-title {
    height: 29px;
    line-height: 29px;
    padding-left: 6px;
    font-family: "Lato", sans-serif;
    font-size: 12.5px;
    color: #555;
}
.legend-body {
    height: 40px;
    background: #e1eeea;
    padding: 3px 4px 0;
}
.ramp {
    height: 16px;
    border: 1px solid #9db3b5;
    background: linear-gradient(to right, #b7dbf0, #78a7ce 42%, #2a5585);
}
.ramp-labels {
    display: flex;
    justify-content: space-between;
    font-family: "Liberation Serif", serif;
    font-style: italic;
    font-size: 15px;
    line-height: 19px;
    color: #333;
}

/* sheet tabs */
.tabbar {
    height: 29px;
    flex: none;
    display: flex;
    background: #f5f5f5;
    font-family: "Lato", sans-serif;
    font-size: 12.4px;
    color: #666;
}
.tab {
    height: 29px;
    display: flex;
    align-items: center;
    gap: 5px;
    padding-left: 6px;
    background: #e6e6e6;
    border-top: 1px solid #d4d4d4;
    border-right: 1px solid #d4d4d4;
    border-bottom: 1px solid #d4d4d4;
    overflow: hidden;
    white-space: nowrap;
    flex: none;
}
.tab.active {
    background: #fff;
    border-bottom: 0;
    font-weight: 700;
    font-size: 13px;
    color: #444;
}
.t-source { width: 131px; padding-left: 9px; }
.t-kpi { width: 33px; }
.t-gender { width: 124px; }
.t-dept { width: 162px; }
.t-age { width: 167px; }
.t-job { width: 136px; }
.t-edu { width: 195px; }
.t-rate { width: 200px; }
.t-dash { width: 121px; padding-left: 6px; }
.t-add { width: 29px; }
.t-add2 { width: 36px; padding-left: 10px; }
.t-add3 { flex: 1; padding-left: 9px; border-right: 0; }

/* status */
.statusbar {
    height: 21px;
    flex: none;
    display: flex;
    align-items: center;
    background: #e9e9e9;
    font-family: "Lato", sans-serif;
    font-size: 11.4px;
    color: #444;
}
.st-marks { margin-left: 3px; width: 65px; }
.st-rows { width: 126px; }
.st-sum { width: 806px; }
.st-cells {
    display: flex;
    height: 100%;
}
.st-cells i {
    height: 100%;
    border-left: 1px solid #d4d4d4;
    display: block;
}
.c1 { width: 126px; }
.c2 { width: 27px; }
.c3 { width: 27px; }
.c4 { width: 47px; }
.st-nav {
    width: 71px;
    height: 100%;
    padding-left: 8px;
    border-left: 1px solid #d4d4d4;
    display: flex;
    align-items: center;
    gap: 8px;
    flex: none;
}
.st-views {
    flex: 1;
    height: 100%;
    border-left: 1px solid #d4d4d4;
    padding-left: 8px;
    display: flex;
    align-items: center;
    gap: 12px;
}

/* windows taskbar */
.taskbar {
    height: 40px;
    flex: none;
    display: flex;
    background: linear-gradient(to right, #1d1715, #1c1a1a 45%, #1a1c24 100%);
    color: #eee;
    font-family: "Noto Sans", sans-serif;
}
.start {
    width: 48px;
    display: flex;
    align-items: center;
    justify-content: center;
}
.task-search {
    width: 344px;
    background: #f3f3f3;
    display: flex;
    align-items: center;
    gap: 12px;
    padding-left: 12px;
    color: #222;
    font-size: 14px;
}
.task-apps {
    display: flex;
    margin-left: 2px;
}
.app {
    width: 49px;
    height: 40px;
    display: flex;
    align-items: center;
    justify-content: center;
}
.app-open {
    border-bottom: 2px solid #76b9ed;
}
.app-active {
    background: #3b3f47;
}
.tb-tile {
    width: 22px;
    height: 22px;
    background: #e8eef2;
    display: flex;
    align-items: center;
    justify-content: center;
}
.tray {
    margin-left: auto;
    display: flex;
    align-items: center;
    gap: 7px;
    padding-right: 10px;
}
.tray-batt {
    margin-left: 7px;
}
.tray-wifi {
    margin-left: -1px;
}
.tray-sound {
    margin-left: -2px;
}
.lang {
    margin-left: 1px;
    font-size: 12px;
}
.clock {
    margin-left: 4px;
    width: 62px;
    display: flex;
    flex-direction: column;
    align-items: center;
    font-size: 12px;
    line-height: 20px;
    white-space: nowrap;
}
.notify {
    margin-left: 8px;
    width: 32px;
    height: 40px;
    display: flex;
    align-items: center;
    position: relative;
}
.badge {
    position: absolute;
    left: 8px;
    top: 14px;
    width: 18px;
    height: 18px;
    border-radius: 50%;
    background: #2b2b2b;
    border: 1px solid #888;
    font-size: 11px;
    line-height: 16px;
    text-align: center;
}
```
